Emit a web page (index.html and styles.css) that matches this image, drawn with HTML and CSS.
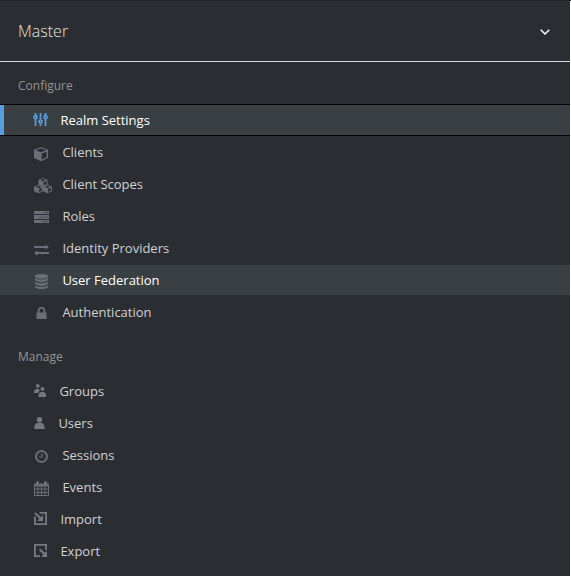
FILE: index.html
```html
<!DOCTYPE html>
<html lang="en">
<head>
<meta charset="utf-8">
<title>Master</title>
<link rel="stylesheet" href="styles.css">
</head>
<body>
<nav class="sidebar">
  <header class="realm"><span>Master</span>
    <svg class="chevron" viewBox="0 0 12 8"><path d="M1.700 1.700 6 6l4.300-4.300"/></svg>
  </header>
  <h2>Configure</h2>
  <ul>
    <li class="active"><svg class="icon line" viewBox="0 0 24 24"><path d="M3.500 5v2.500M3.500 11v7M8.500 5v6.500M8.500 15.500V18M13.500 5v2.500M13.500 11v7"/><circle cx="3.500" cy="9.200" r="1.500"/><circle cx="8.500" cy="13.500" r="1.500"/><circle cx="13.500" cy="9.200" r="1.500"/></svg><span class="near">Realm Settings</span></li>
    <li><svg class="icon" viewBox="0 0 24 24"><path fill-rule="evenodd" d="M9 7l7 2.700v8.300l-7 3.300-7-3.300V9.700zM9 8.300L3.700 10.300 9 12.300l5.300-2zM9.700 13.600v6l5-2.400v-5.500z"/></svg><span>Clients</span></li>
    <li><svg class="icon" viewBox="0 0 24 24"><path id="cube" fill-rule="evenodd" d="M11 6l4.500 1.800v4.700l-4.500 2-4.500-2V7.800zM11 7L8.200 8.100 11 9.200l2.800-1.100zM11.600 10.300v3l2.800-1.300V9.100z"/><use href="#cube" x="-4.500" y="6.700"/><use href="#cube" x="4.500" y="6.700"/></svg><span>Client Scopes</span></li>
    <li><svg class="icon" viewBox="0 0 24 24"><path d="M2 7h15v3H2zM2 11h15v4H2zM2 16h15v3H2z"/><path class="slot" d="M12 8h4v1h-4zM7 12.700h9v1H7zM10 17h6v1h-6z"/></svg><span>Roles</span></li>
    <li><svg class="icon" viewBox="0 0 24 24"><path d="M2 10h11.500V8.500L17 11l-3.500 2.500V12H2zM17 16H5.500v-1.500L2 17l3.500 2.700V18H17z"/></svg><span>Identity Providers</span></li>
    <li class="hover"><svg class="icon" viewBox="0 0 24 24"><ellipse cx="9.500" cy="8.300" rx="6.500" ry="2.400"/><path d="M3 10q6.500 3 13 0v2.200q-6.500 4-13 0zM3 13.700q6.500 3.300 13 0v2.200q-6.500 4-13 0zM3 17.400q6.500 3.300 13 0v1.800q-6.500 3.800-13 0z"/></svg><span>User Federation</span></li>
    <li><svg class="icon" viewBox="0 0 24 24"><path fill-rule="evenodd" d="M4.500 12.500h1.200v-1.800a3.800 3.800 0 0 1 7.600 0v1.800h1.200V19h-10zm3-.1h4v-1.700a2 2 0 0 0-4 0z"/></svg><span>Authentication</span></li>
  </ul>
  <h2>Manage</h2>
  <ul>
    <li><svg class="icon gray" viewBox="0 0 24 24"><circle cx="5.700" cy="6.900" r="1.900"/><circle cx="10.500" cy="9.900" r="1.900"/><path d="M2 14v-1.500q.3-2.500 2.500-2.500h2.700l.3 2L6 14zM6.500 18v-1.600q.3-3.400 3-3.400h1.800q2.400 0 2.700 3.400V18z"/></svg><span class="group">Groups</span></li>
    <li><svg class="icon gray" viewBox="0 0 24 24"><circle cx="7.500" cy="8.800" r="2.800"/><path d="M2.500 18v-1.800q.3-4.200 3.300-4.200h3.400q3 0 3.300 4.200V18z"/></svg><span class="user">Users</span></li>
    <li><svg class="icon line clock" viewBox="0 0 24 24"><circle cx="9.500" cy="13.500" r="5.500"/><path class="hand" d="M10 10.500v3.500H7"/></svg><span>Sessions</span></li>
    <li><svg class="icon" viewBox="0 0 24 24"><path fill-rule="evenodd" d="M2 8.500h2V7l1-1h1l1 1v1.500h5V7l1-1h1l1 1v1.500h2V21H2zM3 11.500v2h2.500v-2zm3.500 0v2H9v-2zm3.500 0v2h2.500v-2zm3.500 0v2H16v-2zM3 14.500V17h2.500v-2.500zm3.500 0V17H9v-2.500zm3.500 0V17h2.500v-2.500zm3.500 0V17H16v-2.500zM3 18v2h2.500v-2zm3.500 0v2H9v-2zm3.500 0v2h2.500v-2zm3.500 0v2H16v-2z"/></svg><span>Events</span></li>
    <li><svg class="icon gray" viewBox="0 0 24 24"><path d="M7.500 5H15v13H2V9.500h1.800v6.700h9.400V6.800H7.500zM2.300 6.600L3.700 5.200l5.100 5L11 8v6H5l2.300-2.300z"/></svg><span class="near">Import</span></li>
    <li><svg class="icon gray" viewBox="0 0 24 24"><path d="M2 5h13v6h-1.800V6.800H3.800v9.400H8V18H2zM6.800 10.800L8.200 9.400l4.600 4.400L15 12v6H9.300l2-2.500z"/></svg><span class="near">Export</span></li>
  </ul>
</nav>
</body>
</html>
```

FILE: styles.css
```css
* { box-sizing: border-box; }
body {
  margin: 0;
  background: #fff;
  border-top: 1px solid #242526;
  font-family: "Open Sans", sans-serif;
  overflow: hidden;
}
.sidebar {
  width: 570px;
  height: 575px;
  background: #2a2d32;
}
.realm {
  display: flex;
  justify-content: space-between;
  align-items: center;
  height: 61px;
  padding: 0 19px 0 18px;
  border-bottom: 1px solid #d7dcda;
  color: #e2e3e3;
  font-size: 16px;
  font-weight: 300;
}
.realm span { margin-top: -1px; }
.chevron {
  width: 12px;
  height: 8px;
  margin-top: 1px;
  fill: none;
  stroke: #fff;
  stroke-width: 1.5;
}
h2 {
  height: 42px;
  margin: 0;
  padding-left: 18px;
  color: #929496;
  font-size: 12px;
  font-weight: 400;
  line-height: 47px;
}
ul + h2 { height: 47px; line-height: 57px; }
ul { margin: 0; padding: 0; list-style: none; }
li {
  display: flex;
  align-items: center;
  height: 32px;
  padding-left: 32px;
  border: solid transparent;
  border-width: 1px 0;
  background-clip: padding-box;
  color: #d1d2d3;
  font-size: 13px;
  line-height: 30px;
}
li span { margin-left: 6.4px; }
li .near { margin-left: 4.4px; }
li .group { margin-left: 3.4px; }
li .user { margin-left: 2.4px; }
.icon {
  width: 24px;
  height: 24px;
  flex: none;
  fill: #6b6e77;
}
.gray { fill: #75787c; }
.line { fill: none; stroke: #6b6e77; stroke-width: 1.5; }
.clock { stroke-width: 2; }
.hand { stroke-width: 1.2; }
.slot { fill: #484c53; }
.active, .hover { background-color: #3a3f43; color: #fff; }
.active {
  border-color: #030304;
  box-shadow: inset 4px 0 #5b9edc;
}
.active .icon { stroke: #5b9edc; stroke-width: 1.7; }
```
